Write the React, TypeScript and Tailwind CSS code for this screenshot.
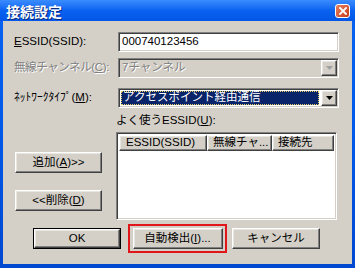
import React from 'react';

const sunken =
  'border border-t-[#808080] border-l-[#808080] border-b-white border-r-white shadow-[inset_1px_1px_0_#404040,inset_-1px_-1px_0_#d4d0c8]';
const raised =
  'border border-t-white border-l-white border-b-[#404040] border-r-[#404040] shadow-[inset_-1px_-1px_0_#808080,inset_1px_1px_0_#e8e6e0] bg-[#d4d0c8]';

function Arrow({ disabled }: { disabled?: boolean }) {
  return (
    <div className={`w-[16px] h-[16px] flex items-center justify-center shrink-0 ${raised}`}>
      <svg width="7" height="4" viewBox="0 0 7 4">
        <path d="M0 0h7L3.5 4z" fill={disabled ? '#a0a0a0' : '#000'} />
      </svg>
    </div>
  );
}

function Btn({ children, def }: { children: React.ReactNode; def?: boolean }) {
  return (
    <div
      className={`flex items-center justify-center h-[21px] ${
        def ? 'border border-black' : ''
      }`}
    >
      <div className={`w-full h-full flex items-center justify-center leading-none text-black ${raised}`}>
        {children}
      </div>
    </div>
  );
}

export default function App() {
  return (
    <div
      className="w-[355px] h-[268px] flex flex-col bg-gradient-to-b from-[#0a62f0] via-[#0058e8] to-[#0048d0] select-none"
      style={{ fontFamily: '"Liberation Sans", "Noto Sans CJK JP", sans-serif' }}
    >
      {/* title bar */}
      <div className="h-[21px] shrink-0 flex items-center justify-between pl-[6px] pr-[5px] bg-gradient-to-b from-[#3a8cff] via-[#0a62f0] to-[#0356e6]">
        <span
          className="text-white text-[14px] font-bold leading-none [text-shadow:1px_1px_0_#0a2a7a]"
          style={{ fontFamily: '"Noto Sans CJK JP", sans-serif' }}
        >
          接続設定
        </span>
        <div className="w-[15px] h-[14px] rounded-[3px] border border-white bg-gradient-to-br from-[#e8805e] to-[#c53a14] flex items-center justify-center">
          <svg width="8" height="8" viewBox="0 0 8 8">
            <path d="M1 1l6 6M7 1l-6 6" stroke="#fff" strokeWidth="1.8" strokeLinecap="square" />
          </svg>
        </div>
      </div>

      {/* body */}
      <div className="flex-1 mx-[3px] mb-[4px] bg-[#d4d0c8] flex flex-col pl-[11px] pt-[11px] text-[11.5px] leading-none text-black">
        <div className="flex items-center h-[20px]">
          <div className="w-[104px]">
            <span className="underline">E</span>SSID(SSID):
          </div>
          <div className={`w-[221px] h-[20px] bg-white flex items-center px-[3px] ${sunken}`}>000740123456</div>
        </div>

        <div className="flex items-center h-[20px] mt-[6px]">
          <div className="w-[104px] tracking-[-0.4px] text-[#808080] [text-shadow:1px_1px_0_#fff]">
            無線チャンネル(<span className="underline">C</span>):
          </div>
          <div className={`w-[221px] h-[20px] bg-[#d4d0c8] flex items-center justify-between pl-[3px] pr-[1px] ${sunken}`}>
            <span className="text-[#808080] [text-shadow:1px_1px_0_#fff]">7チャンネル</span>
            <Arrow disabled />
          </div>
        </div>

        <div className="flex items-center h-[20px] mt-[10px]">
          <div className="w-[104px]">
            ﾈｯﾄﾜｰｸﾀｲﾌﾟ(<span className="underline">M</span>):
          </div>
          <div className={`w-[221px] h-[20px] bg-white flex items-center justify-between pl-[2px] pr-[1px] ${sunken}`}>
            <div className="flex-1 h-[14px] mr-[2px] bg-[#0a246a] border border-dotted border-[#e8d060] text-white flex items-center px-[1px]">
              アクセスポイント経由通信
            </div>
            <Arrow />
          </div>
        </div>

        <div className="flex">
          <div className="w-[102px] pl-[1px] pr-[14px] flex flex-col">
            <div className="mt-[44px]">
              <Btn>
                追加(<span className="underline">A</span>)&gt;&gt;
              </Btn>
            </div>
            <div className="mt-[17px]">
              <Btn>
                &lt;&lt;削除(<span className="underline">D</span>)
              </Btn>
            </div>
          </div>
          <div className="flex flex-col">
            <div className="h-[24px] flex items-center pt-[2px]">
              よく使うESSID(<span className="underline">U</span>):
            </div>
            <div className={`w-[221px] h-[88px] bg-white p-[2px] ${sunken}`}>
              <div className="flex h-[16px]">
                <div className={`w-[88px] h-full flex items-center pl-[6px] ${raised}`}>ESSID(SSID)</div>
                <div className={`w-[65px] h-full flex items-center pl-[5px] ${raised}`}>無線チャ...</div>
                <div className={`flex-1 h-full flex items-center pl-[5px] ${raised}`}>接続先</div>
              </div>
            </div>
          </div>
        </div>

        <div className="flex items-center mt-[4px] pl-[19px]">
          <div className="w-[88px]">
            <Btn def>OK</Btn>
          </div>
          <div className="ml-[7px] w-[99px] h-[29px] border-2 border-[#e0161b] flex items-center justify-center">
            <div className="w-[90px]">
              <Btn>
                自動検出(<span className="underline">I</span>)...
              </Btn>
            </div>
          </div>
          <div className="ml-[5px] w-[88px]">
            <Btn>キャンセル</Btn>
          </div>
        </div>
      </div>
    </div>
  );
}
